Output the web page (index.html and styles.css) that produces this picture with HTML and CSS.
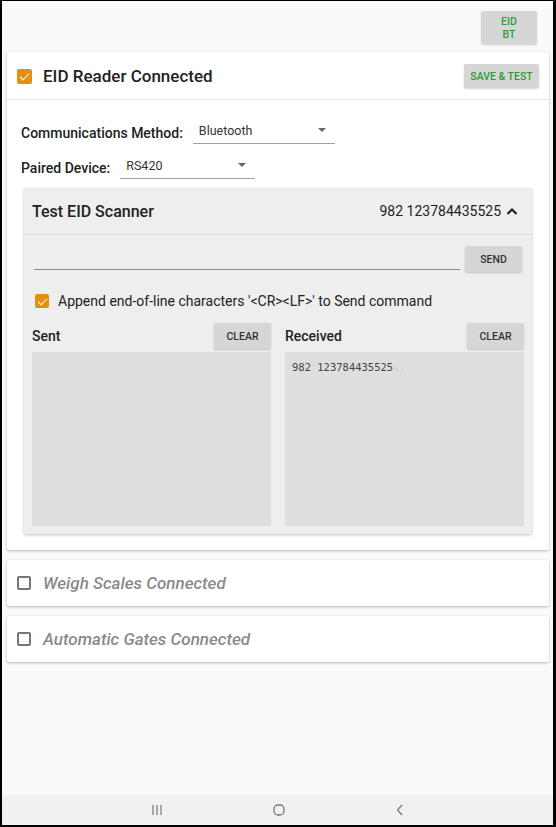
FILE: index.html
```html
<!DOCTYPE html>
<html lang="en">

<head>
    <meta charset="UTF-8">
    <meta name="viewport" content="width=device-width, initial-scale=1.0">
    <title>Device Settings</title>
    <link rel="stylesheet" href="styles.css">
</head>

<body>
    <div class="screen">
        <div class="content">
            <div class="topbar">
                <button class="btn btn-green btn-eid">EID<br>BT</button>
            </div>

            <!-- EID reader -->
            <div class="card">
                <div class="card-head">
                    <span class="check checked"></span>
                    <h2 class="card-title">EID Reader Connected</h2>
                    <button class="btn btn-green btn-save">SAVE &amp; TEST</button>
                </div>
                <div class="card-body">
                    <div class="field-row">
                        <label class="field-label">Communications Method:</label>
                        <div class="select select-method">Bluetooth<span class="arrow"></span></div>
                    </div>
                    <div class="field-row last">
                        <label class="field-label">Paired Device:</label>
                        <div class="select select-device">RS420<span class="arrow"></span></div>
                    </div>

                    <div class="scanner">
                        <div class="scanner-head">
                            <h3 class="scanner-title">Test EID Scanner</h3>
                            <span class="scanner-tag">982 123784435525</span>
                            <svg class="chevron" width="12" height="8" viewBox="0 0 12 8">
                                <path d="M1.5 7 L6 2.5 L10.5 7" fill="none" stroke="#222" stroke-width="2.2" />
                            </svg>
                        </div>
                        <div class="scanner-body">
                            <div class="send-row">
                                <div class="send-input"></div>
                                <button class="btn btn-grey btn-send">SEND</button>
                            </div>
                            <div class="append-row">
                                <span class="check checked check-small"></span>
                                <span>Append end-of-line characters '&lt;CR&gt;&lt;LF&gt;' to Send command</span>
                            </div>
                            <div class="logs">
                                <div class="log">
                                    <div class="log-head">
                                        <span class="log-title">Sent</span>
                                        <button class="btn btn-grey btn-clear">CLEAR</button>
                                    </div>
                                    <div class="log-box"></div>
                                </div>
                                <div class="log">
                                    <div class="log-head">
                                        <span class="log-title">Received</span>
                                        <button class="btn btn-grey btn-clear">CLEAR</button>
                                    </div>
                                    <div class="log-box">982 123784435525<span class="ctrl">␍␊</span></div>
                                </div>
                            </div>
                        </div>
                    </div>
                </div>
            </div>

            <div class="card card-off">
                <span class="check"></span>
                <h2 class="card-title off">Weigh Scales Connected</h2>
            </div>

            <div class="card card-off">
                <span class="check"></span>
                <h2 class="card-title off">Automatic Gates Connected</h2>
            </div>
        </div>

        <div class="navbar">
            <svg width="14" height="12" viewBox="0 0 14 12">
                <path d="M3 1 V11 M7 1 V11 M11 1 V11" stroke="#777" stroke-width="1.2" />
            </svg>
            <svg width="14" height="14" viewBox="0 0 14 14">
                <rect x="2" y="2" width="10" height="10" rx="4" fill="none" stroke="#777" stroke-width="1.3" />
            </svg>
            <svg width="12" height="14" viewBox="0 0 12 14">
                <path d="M8 2 L3.5 7 L8 12" fill="none" stroke="#777" stroke-width="1.3" />
            </svg>
        </div>
    </div>
</body>

</html>
```

FILE: styles.css
```css
* {
    box-sizing: border-box;
}

body {
    margin: 0;
    font-family: Roboto, "Liberation Sans", sans-serif;
    color: #222;
}

.screen {
    width: 556px;
    height: 827px;
    border-style: solid;
    border-color: #000;
    border-width: 1px 3px 2px 2px;
    background-color: #fafafa;
    display: flex;
    flex-direction: column;
}

.content {
    flex: 1;
    padding: 0 4px 0 5px;
}

.topbar {
    display: flex;
    justify-content: flex-end;
    padding: 10px 12px 8px 0;
}

.btn {
    border: none;
    border-radius: 2px;
    font-family: Roboto, sans-serif;
    font-weight: 500;
    font-size: 10.5px;
    box-shadow: 0 1px 2px rgba(0, 0, 0, 0.18);
    padding: 0;
}

.btn-green {
    background-color: #d6d6d6;
    color: #2f9a36;
}

.btn-grey {
    background-color: #d6d6d6;
    color: #333;
}

.btn-eid {
    width: 56px;
    height: 33px;
    line-height: 13px;
}

.btn-save {
    width: 75px;
    height: 24px;
    margin-left: auto;
}

.btn-send,
.btn-clear {
    width: 57px;
    height: 26px;
}

.card {
    background-color: #fff;
    border-radius: 2px;
    box-shadow: 0 1px 3px rgba(0, 0, 0, 0.28);
    margin-bottom: 10px;
}

.card-head {
    display: flex;
    align-items: center;
    height: 48px;
    padding: 1px 10px 0 10px;
    border-bottom: 1px solid #e2e2e2;
}

.check {
    width: 15px;
    height: 15px;
    border: 2px solid #757575;
    border-radius: 2px;
    flex-shrink: 0;
    position: relative;
}

.check.checked {
    background-color: #e3900f;
    border-color: #e3900f;
}

.check.checked::after {
    content: "";
    position: absolute;
    left: 3px;
    top: 0px;
    width: 4px;
    height: 8px;
    border: solid #fff;
    border-width: 0 1.6px 1.6px 0;
    transform: rotate(45deg);
}

.check-small {
    width: 14px;
    height: 14px;
}

.check-small::after {
    left: 3px;
    top: 0px;
    height: 7px;
}

.card-title {
    margin: 0 0 0 11px;
    font-size: 17px;
    font-weight: 500;
    color: #222;
}

.card-title.off {
    font-style: italic;
    color: #8a8a8a;
    margin-left: 12px;
}

.card-off {
    display: flex;
    align-items: center;
    height: 46px;
    padding: 0 10px;
}

.card-off .check {
    width: 14px;
    height: 14px;
}

.card-body {
    padding: 23px 14px 16px 14px;
}

.field-row {
    display: flex;
    align-items: flex-end;
    margin-bottom: 14px;
}

.field-row.last {
    margin-bottom: 9px;
}

.field-label {
    font-size: 14px;
    font-weight: 500;
    padding-bottom: 3px;
    margin-right: 10px;
}

.select {
    position: relative;
    font-size: 12.5px;
    color: #333;
    padding: 0 0 5px 6px;
    border-bottom: 1px solid #a0a0a0;
}

.select-method {
    width: 142px;
}

.select-device {
    width: 135px;
}

.arrow {
    position: absolute;
    right: 9px;
    top: 5px;
    border-left: 4px solid transparent;
    border-right: 4px solid transparent;
    border-top: 4px solid #666;
}

.scanner {
    margin: 0 3px;
    background-color: #eeeeee;
    border-radius: 2px;
    box-shadow: 0 1px 3px rgba(0, 0, 0, 0.25);
}

.scanner-head {
    display: flex;
    align-items: center;
    height: 47px;
    padding: 0 14px 0 8px;
    border-bottom: 1px solid #dcdcdc;
}

.scanner-title {
    margin: 0;
    font-size: 16px;
    font-weight: 500;
}

.scanner-tag {
    margin-left: auto;
    font-size: 14px;
    color: #222;
}

.chevron {
    margin-left: 5px;
}

.scanner-body {
    padding: 11px 8px 8px 8px;
}

.send-row {
    display: flex;
    align-items: center;
    padding: 0 2px;
}

.send-input {
    flex: 1;
    height: 22px;
    border-bottom: 1px solid #8a8a8a;
    margin-right: 5px;
}

.append-row {
    display: flex;
    align-items: center;
    font-size: 14px;
    color: #222;
    padding: 21px 0 0 3px;
}

.append-row .check {
    margin-right: 9px;
}

.logs {
    display: flex;
    gap: 14px;
    margin-top: 14px;
}

.log {
    flex: 1;
}

.log-head {
    display: flex;
    align-items: center;
    justify-content: space-between;
    margin-bottom: 3px;
}

.log-title {
    font-size: 14px;
    font-weight: 500;
}

.log-box {
    height: 174px;
    background-color: #dedede;
    padding: 9px 7px;
    font-family: "DejaVu Sans Mono", monospace;
    font-size: 10.5px;
    color: #444;
    white-space: pre;
}

.ctrl {
    font-size: 7px;
    color: #aaa;
}

.navbar {
    height: 30px;
    background-color: #f1f1f1;
    display: flex;
    align-items: center;
    justify-content: center;
    gap: 108px;
}
```
